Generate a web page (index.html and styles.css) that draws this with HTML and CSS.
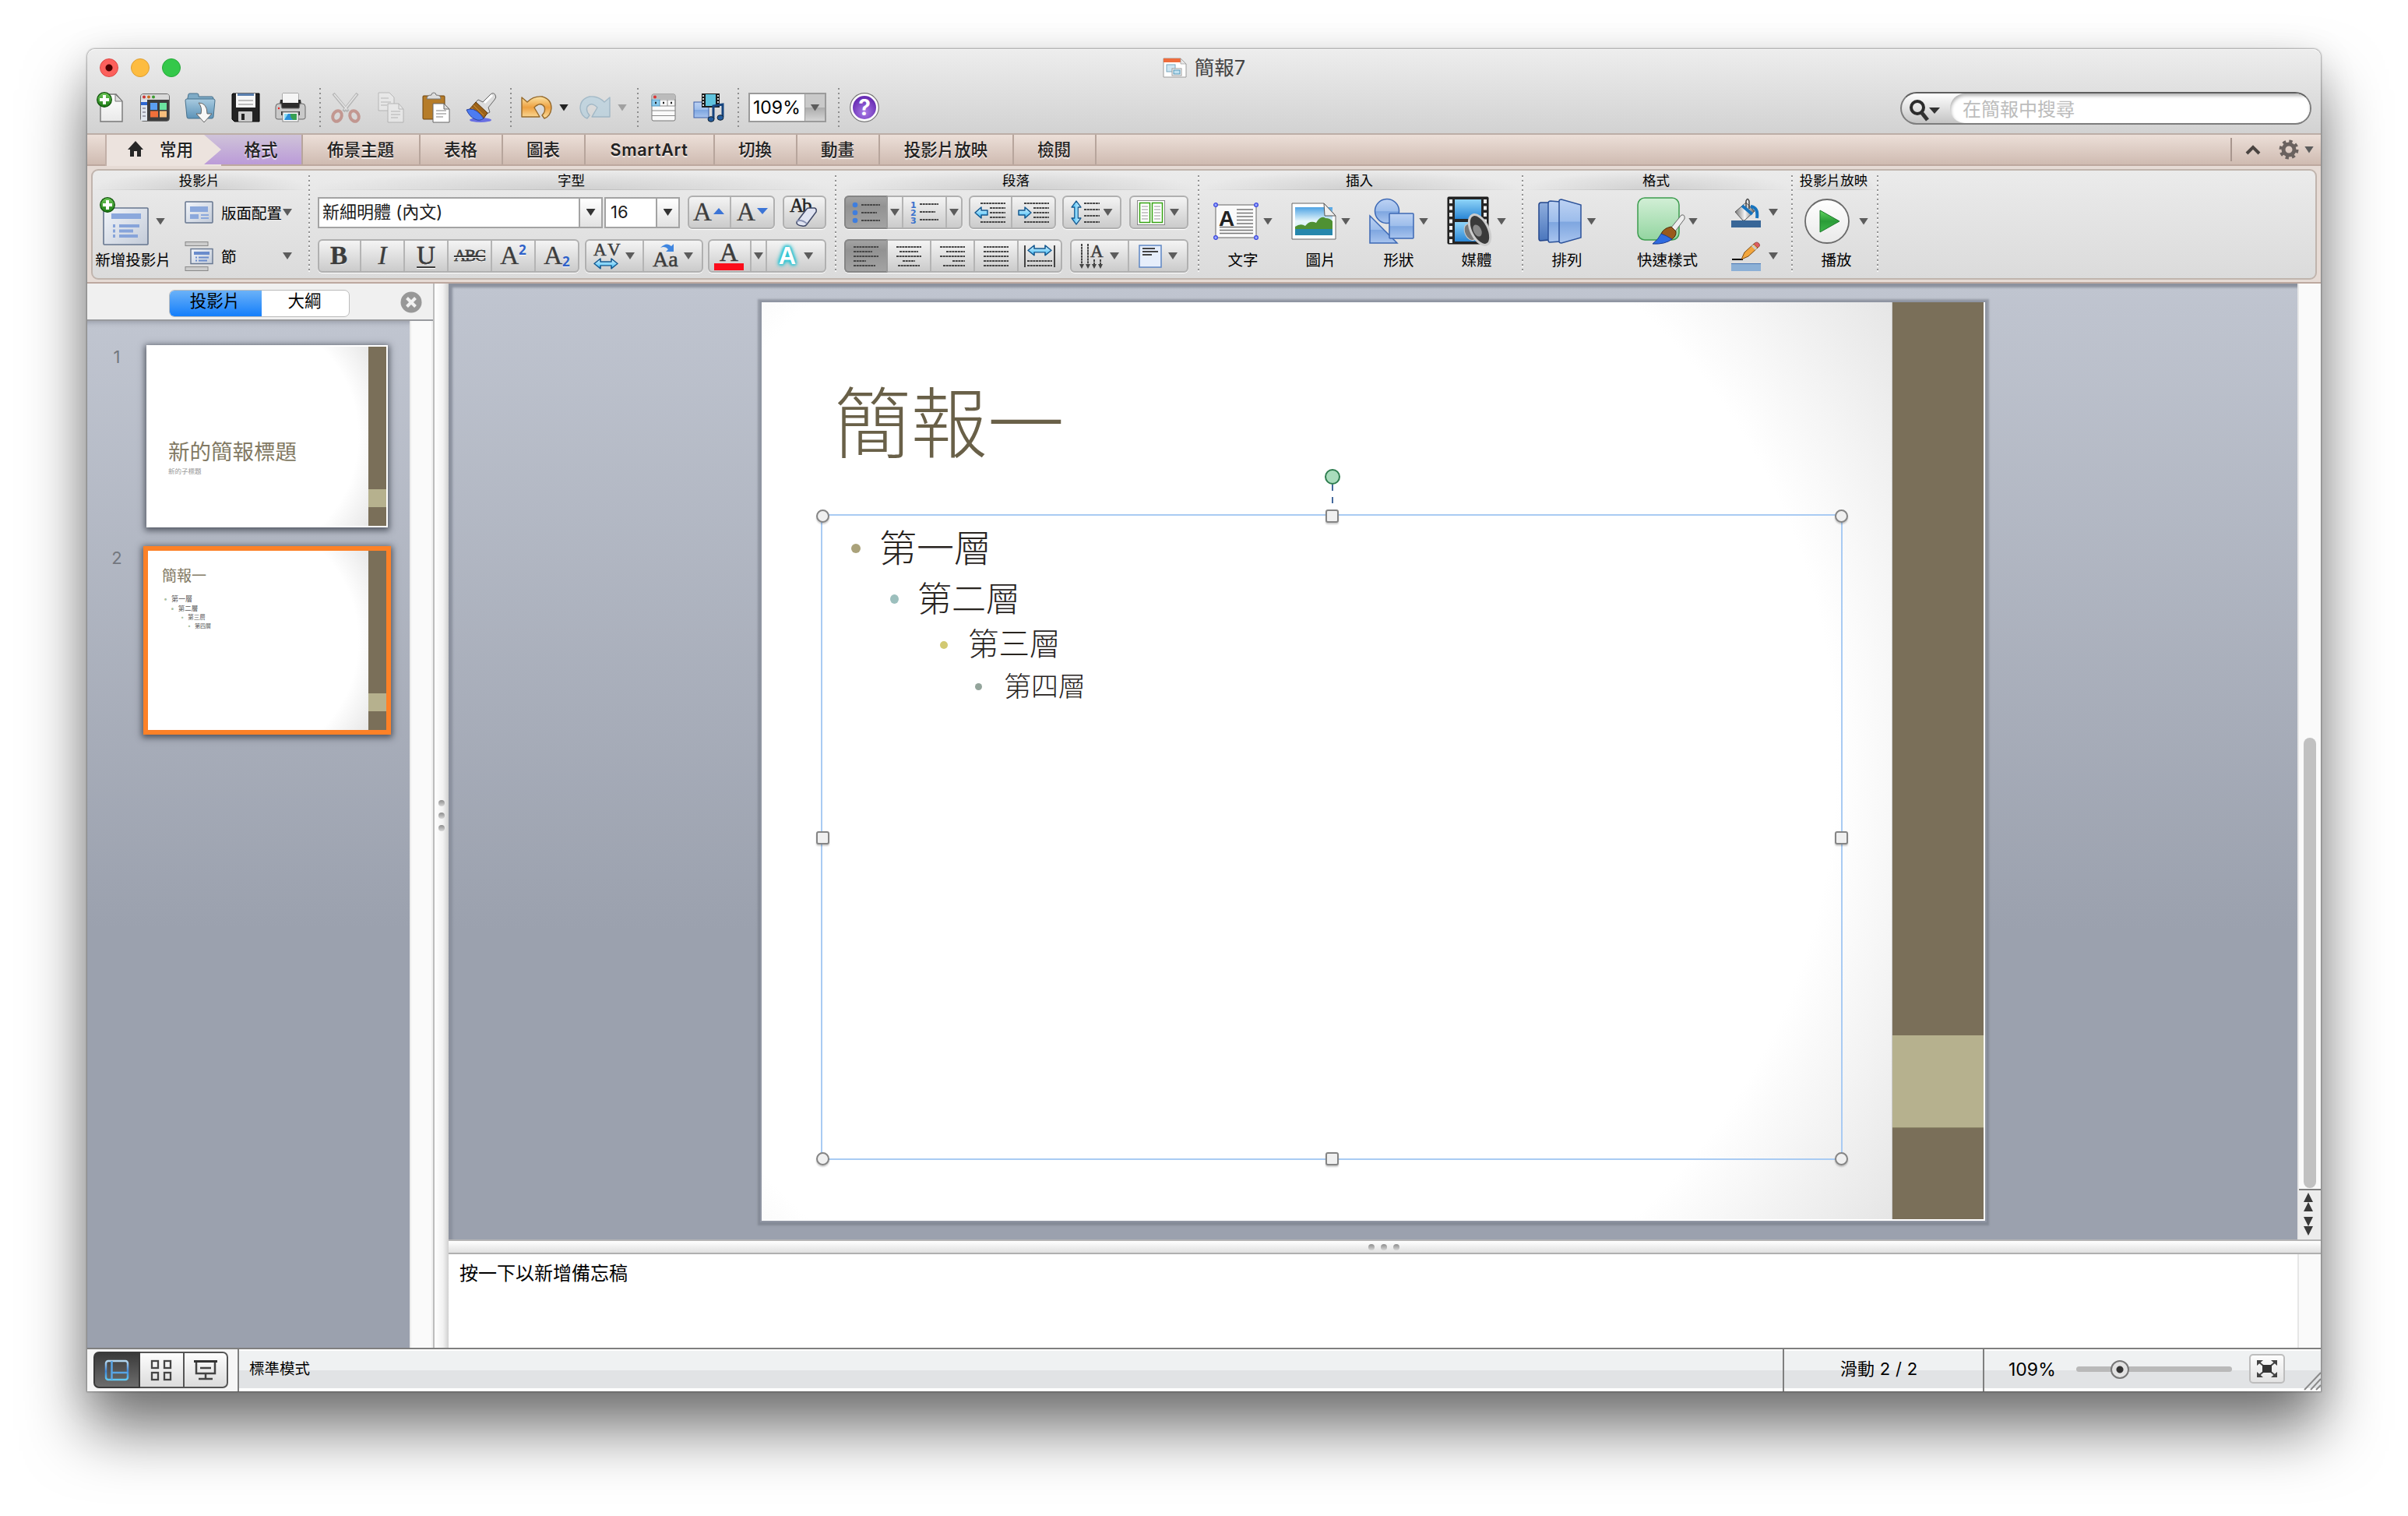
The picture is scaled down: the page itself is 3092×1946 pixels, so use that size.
FILE: index.html
```html
<!DOCTYPE html>
<html lang="zh-Hant">
<head>
<meta charset="utf-8">
<title>簡報7</title>
<link rel="stylesheet" href="styles.css">
</head>
<body>
<svg class="defs" width="0" height="0">
  <defs>
    <linearGradient id="blue" x1="0" y1="0" x2="0" y2="1"><stop offset="0" stop-color="#bdd2f3"/><stop offset=".5" stop-color="#9dbdeb"/><stop offset=".52" stop-color="#7ea6e0"/><stop offset="1" stop-color="#a8c4ee"/></linearGradient>
    <linearGradient id="navy" x1="0" y1="0" x2="0" y2="1"><stop offset="0" stop-color="#8faede"/><stop offset="1" stop-color="#4a76bd"/></linearGradient>
    <linearGradient id="green" x1="0" y1="0" x2="0" y2="1"><stop offset="0" stop-color="#d2efd6"/><stop offset="1" stop-color="#93d5a0"/></linearGradient>
    <linearGradient id="plus" x1="0" y1="0" x2="0" y2="1"><stop offset="0" stop-color="#6fca5a"/><stop offset="1" stop-color="#1b7a14"/></linearGradient>
    <linearGradient id="paper" x1="0" y1="0" x2="0" y2="1"><stop offset="0" stop-color="#fff"/><stop offset="1" stop-color="#e9e9e9"/></linearGradient>
    <linearGradient id="slidepaper" x1="0" y1="0" x2="1" y2="1"><stop offset="0" stop-color="#f2f5fa"/><stop offset="1" stop-color="#c3cbd8"/></linearGradient>
    <linearGradient id="folder" x1="0" y1="0" x2="0" y2="1"><stop offset="0" stop-color="#a9cbe0"/><stop offset="1" stop-color="#5c93b8"/></linearGradient>
    <linearGradient id="gold" x1="0" y1="0" x2="0" y2="1"><stop offset="0" stop-color="#fbe3a3"/><stop offset=".5" stop-color="#eda040"/><stop offset="1" stop-color="#fbe0a0"/></linearGradient>
    <linearGradient id="metal" x1="0" y1="0" x2="1" y2="0"><stop offset="0" stop-color="#777"/><stop offset=".5" stop-color="#f5f5f5"/><stop offset="1" stop-color="#666"/></linearGradient>
    <linearGradient id="sky" x1="0" y1="0" x2="0" y2="1"><stop offset="0" stop-color="#4ea3e4"/><stop offset=".5" stop-color="#e8f7fb"/><stop offset="1" stop-color="#bfe6f2"/></linearGradient>
    <linearGradient id="film" x1="0" y1="0" x2="0" y2="1"><stop offset="0" stop-color="#8fd4f8"/><stop offset="1" stop-color="#2b87d6"/></linearGradient>
    <linearGradient id="playg" x1="0" y1="0" x2="0" y2="1"><stop offset="0" stop-color="#5fd45f"/><stop offset=".5" stop-color="#2a9c38"/><stop offset="1" stop-color="#3db64a"/></linearGradient>
    <linearGradient id="cyan" x1="0" y1="0" x2="0" y2="1"><stop offset="0" stop-color="#e2f8ff"/><stop offset="1" stop-color="#35b6f5"/></linearGradient>
    <radialGradient id="purple" cx=".5" cy=".7" r=".6"><stop offset="0" stop-color="#a97be6"/><stop offset="1" stop-color="#6a2fb5"/></radialGradient>
    <linearGradient id="viewblue" x1="0" y1="0" x2="0" y2="1"><stop offset="0" stop-color="#b5d7ef"/><stop offset=".55" stop-color="#3c86d8"/><stop offset="1" stop-color="#62c8f2"/></linearGradient>
    <g id="badge"><circle cx="10" cy="10" r="9.3" fill="url(#plus)" stroke="#12550d" stroke-width="1.3"/><path d="M10 4v12M4 10h12" stroke="#fff" stroke-width="4"/></g>
    <path id="harrow" d="M0 8L8 0V5H22V0L30 8L22 16V11H8V16Z" fill="url(#cyan)" stroke="#14588f" stroke-width="1.6" stroke-linejoin="round"/>
    <path id="larrow" d="M0 7L8 0V4H16V10H8V14Z" fill="url(#cyan)" stroke="#14588f" stroke-width="1.5" stroke-linejoin="round"/>
  </defs>
</svg>

<div class="window">
  <header class="titlebar">
    <div class="title-row">
      <div class="lights"><i class="red"></i><i class="yellow"></i><i class="green"></i></div>
      <div class="doc-title">
        <svg width="31" height="26" viewBox="0 0 31 26"><path d="M1 1H23L30 8V25H1Z" fill="#fff" stroke="#9a9a9a"/><path d="M1 1H23L25 6H1Z" fill="#ee6c3c"/><path d="M23 1V8H30Z" fill="#e8e8e8" stroke="#999" stroke-width=".7"/><rect x="5" y="9" width="11" height="9" fill="#cfe6f2" stroke="#78a7bf"/><rect x="12" y="14" width="12" height="9" fill="#fff" stroke="#999"/><rect x="14" y="16" width="8" height="5" fill="#bfe0f0" stroke="#4e93b5"/></svg>
        <span>簡報7</span>
      </div>
      <div></div>
    </div>
    <div class="toolbar">
      <div class="tool"><svg width="34" height="40" viewBox="0 0 34 40"><path d="M5 3H25L33 12V38H5Z" fill="url(#paper)" stroke="#777" stroke-width="1.4"/><path d="M24 3V12H33Z" fill="#ddd" stroke="#777"/><use href="#badge" x="0" y="0"/></svg></div>
      <div class="tool"><svg width="38" height="36" viewBox="0 0 38 36"><rect x=".7" y=".7" width="36.6" height="34.6" rx="3" fill="#3c3c3c" stroke="#555"/><path d="M1 8V3Q1 1 3 1H35Q37 1 37 3V8Z" fill="#d9d9d9"/><circle cx="5" cy="4.5" r="2" fill="#c33"/><circle cx="11" cy="4.5" r="2" fill="#c86a1c"/><circle cx="17" cy="4.5" r="2" fill="#3a9a2f"/><rect x="1" y="8" width="8" height="27" fill="#dfe6ee"/><rect x="1" y="11" width="8" height="4" fill="#2c66d0"/><path d="M3 19h4M3 24h4M3 29h4" stroke="#889" stroke-width="1.6"/><rect x="13" y="12" width="9" height="9" fill="#5b9ff0"/><rect x="25" y="12" width="9" height="9" fill="#6be3a0"/><rect x="13" y="22.500" width="10" height="8" fill="#f0703a"/><rect x="25" y="22.500" width="9" height="8" fill="#f6bd7c"/></svg></div>
      <div class="tool"><svg width="40" height="38" viewBox="0 0 40 38"><path d="M3 12L5 2Q5 1 7 1H16Q18 1 18 3V5H35Q37 5 37 8V12Z" fill="#7fabc6" stroke="#47718c"/><path d="M1 10Q1 8 3 8H37Q39 8 39 10L37 31Q37 33 35 33H5Q3 33 3 31Z" fill="url(#folder)" stroke="#47718c"/><path d="M18 13Q29 13 29 27H35L25 38L15 27H21Q23 19 18 13Z" fill="#f7f7f7" stroke="#666"/></svg></div>
      <div class="tool"><svg width="37" height="38" viewBox="0 0 37 38"><path d="M2 1H36V37H4L1 34V2Z" fill="#232323" stroke="#000"/><path d="M6 1H31V19H6Z" fill="#f7f7f7"/><path d="M8 1H29V4H8Z" fill="#5a7fae"/><path d="M9 10h19M9 15h19" stroke="#aaa" stroke-width="1.6"/><rect x="9" y="24" width="18" height="13" rx="1" fill="#ccc"/><rect x="13" y="27" width="4" height="8" fill="#222"/></svg></div>
      <div class="tool"><svg width="40" height="38" viewBox="0 0 40 38"><path d="M10 1H30V12H10Z" fill="#fff" stroke="#777"/><path d="M7 9H33L35 21H5Z" fill="#2d2d2d"/><path d="M10 1H30V13H10Z" fill="#f5f5f5"/><path d="M1 18Q1 14 5 14H8L9 20H31L32 14H35Q39 14 39 18V32Q39 34 36 34H4Q1 34 1 32Z" fill="#c9c9c9" stroke="#666"/><rect x="8" y="24" width="24" height="5" fill="#333"/><circle cx="5" cy="20" r="1.200" fill="#e22"/><rect x="10" y="25" width="20" height="12" fill="#fff" stroke="#888"/><rect x="12" y="27" width="16" height="8" fill="#2b8fd8"/><path d="M12 27h5l-5 8z" fill="#8bdcf4"/><path d="M20 27q-1 4 3 8h5v-8z" fill="#39a053"/></svg></div>
      <i class="tsep"></i>
      <div class="tool faded"><svg width="38" height="40" viewBox="0 0 38 40"><path d="M3 2L22 25M34 2L16 25" stroke="#888" stroke-width="4"/><path d="M4 3L21 23M33 3L17 23" stroke="#eee" stroke-width="1.6"/><ellipse cx="8" cy="31" rx="5.500" ry="7" transform="rotate(25 8 31)" fill="none" stroke="#a94a3c" stroke-width="4"/><ellipse cx="30" cy="31" rx="5.500" ry="7" transform="rotate(-25 30 31)" fill="none" stroke="#a94a3c" stroke-width="4"/></svg></div>
      <div class="tool faded"><svg width="34" height="40" viewBox="0 0 34 40"><path d="M1 1H15L21 7V24H1Z" fill="#f4f4f4" stroke="#888"/><path d="M4 8h10M4 13h13M4 17h8" stroke="#aaa" stroke-width="1.500"/><path d="M13 15H27L33 22V39H13Z" fill="#f7f7f7" stroke="#888"/><path d="M27 15V22H33" fill="none" stroke="#888"/><path d="M17 25h12M17 29h12M17 33h9" stroke="#aaa" stroke-width="1.500"/></svg></div>
      <div class="tool"><svg width="36" height="40" viewBox="0 0 36 40"><rect x="1" y="5" width="28" height="30" rx="1" fill="#b67c28" stroke="#6d430d"/><path d="M6 9Q6 4 12 4Q12 1 15 1Q18 1 18 4Q24 4 24 9Z" fill="#ddd" stroke="#777"/><path d="M14 15H28L35 22V39H14Z" fill="#fff" stroke="#666"/><path d="M28 15V22H35Z" fill="#ddd" stroke="#666"/><path d="M18 24h13M18 28h13M18 32h9" stroke="#aaa" stroke-width="1.500"/></svg></div>
      <div class="tool"><svg width="40" height="40" viewBox="0 0 40 40"><ellipse cx="19" cy="36" rx="14" ry="3" fill="#4e55e6" opacity=".8"/><path d="M22 13L32 3Q36 0 38 4Q40 7 37 10L29 20L31 26L27 28L13 13L16 10Z" fill="#dcdcdc" stroke="#666"/><path d="M24 14L34 4" stroke="#fff" stroke-width="3"/><path d="M13 13L28 27L23 34L5 22Z" fill="#9c6218" stroke="#5a3408"/><path d="M10 17l13 13M7 20l13 12" stroke="#d09238"/><path d="M5 22Q14 21 23 34Q18 38 12 35Q5 32 1 23Z" fill="#4d7cf2" stroke="#2a43a0"/></svg></div>
      <i class="tsep"></i>
      <div class="tool"><svg width="40" height="32" viewBox="0 0 40 32"><path d="M1 3L8 9Q16 1 27 2Q39 5 39 17Q38 27 30 30L27 26Q32 21 30 15Q25 8 17 16L24 28H1Z" fill="url(#gold)" stroke="#96692a" stroke-width="1.400" stroke-linejoin="round"/></svg></div>
      <div class="tdrop"><i class="arrow dark"></i></div>
      <div class="tool faded"><svg width="40" height="32" viewBox="0 0 40 32"><path transform="matrix(-1 0 0 1 40 0)" d="M1 3L8 9Q16 1 27 2Q39 5 39 17Q38 27 30 30L27 26Q32 21 30 15Q25 8 17 16L24 28H1Z" fill="#a4cce2" stroke="#5f8fae" stroke-width="1.400" stroke-linejoin="round"/></svg></div>
      <div class="tdrop faded"><i class="arrow"></i></div>
      <i class="tsep"></i>
      <div class="tool"><svg width="32" height="36" viewBox="0 0 32 36"><rect x="1" y="1" width="30" height="34" rx="2" fill="#fafafa" stroke="#777"/><path d="M1 7V3Q1 1 3 1H29Q31 1 31 3V7Z" fill="#bbb"/><circle cx="5" cy="4.500" r="2" fill="#d33"/><rect x="1" y="8" width="10" height="8" fill="#8ccbee" stroke="#4d93bd"/><path d="M11 8h20v8H11M21 8v8M1 22h30M1 28.500h30" fill="none" stroke="#888"/><path d="M5 12h2M15 12h2M25 12h2" stroke="#222" stroke-width="2.500"/></svg></div>
      <div class="tool"><svg width="40" height="38" viewBox="0 0 40 38"><rect x="1" y="12" width="19" height="20" fill="url(#blue)" stroke="#3a5ea8"/><rect x="11" y="1" width="23" height="18" fill="#1c1c1c"/><rect x="16" y="2" width="13" height="15" fill="#5fc3dd"/><path d="M13 3v15M32 3v15" stroke="#ddd" stroke-width="2" stroke-dasharray="2 2"/><path d="M26 34V17L38 15V31" fill="none" stroke="#17457e" stroke-width="3"/><ellipse cx="23" cy="34" rx="4" ry="3.300" fill="#245d9e" stroke="#123"/><ellipse cx="35" cy="32" rx="4" ry="3.300" fill="#245d9e" stroke="#123"/></svg></div>
      <i class="tsep"></i>
      <div class="zoombox"><span>109%</span><b><i class="arrow"></i></b></div>
      <i class="tsep wide"></i>
      <div class="tool"><svg width="40" height="40" viewBox="0 0 40 40"><circle cx="20" cy="20" r="18.300" fill="#fff" stroke="#777" stroke-width="1.200"/><circle cx="20" cy="20" r="15" fill="url(#purple)"/><text x="20" y="30" text-anchor="middle" class="help-mark">?</text></svg></div>
      <div class="search">
        <div class="search-lens"><svg width="40" height="32" viewBox="0 0 40 32"><circle cx="11" cy="12" r="8" fill="none" stroke="#2b2b2b" stroke-width="4"/><path d="M16 18L24 28" stroke="#333" stroke-width="5"/><path d="M26 12H40L33 20Z" fill="#333"/></svg></div>
        <div class="search-field">在簡報中搜尋</div>
      </div>
    </div>
  </header>

  <nav class="tabs">
    <div class="tab home"><svg width="20" height="20" viewBox="0 0 20 20"><path d="M10 0L20 11H17V20H12V13H8V20H3V11H0Z" fill="#262626"/></svg><span>常用</span></div>
    <div class="tab format">格式</div>
    <div class="tab w151">佈景主題</div>
    <div class="tab w106">表格</div>
    <div class="tab w106">圖表</div>
    <div class="tab w166 bold">SmartArt</div>
    <div class="tab w106">切換</div>
    <div class="tab w106">動畫</div>
    <div class="tab w172">投影片放映</div>
    <div class="tab w106">檢閱</div>
    <div class="tab-tools">
      <svg width="20" height="14" viewBox="0 0 20 14"><path d="M2 12L10 4L18 12" fill="none" stroke="#4a4441" stroke-width="4"/></svg>
      <svg class="gear" width="26" height="26" viewBox="0 0 26 26"><circle cx="13" cy="13" r="7" fill="none" stroke="#6a625f" stroke-width="5"/><circle cx="13" cy="13" r="10.500" fill="none" stroke="#6a625f" stroke-width="4" stroke-dasharray="4.200 4.047"/></svg>
      <i class="arrow"></i>
    </div>
  </nav>

  <section class="ribbon">
    <div class="panel">
      <div class="group g1">
        <h2>投影片</h2>
        <div class="body">
          <div class="big new"><div class="pic"><svg width="64" height="62" viewBox="0 0 64 62"><rect x="5" y="14" width="57" height="47" rx="1" fill="url(#slidepaper)" stroke="#66768f" stroke-width="1.600"/><path d="M15 24.500H53" stroke="#8ba8dc" stroke-width="7"/><path d="M25 37H51M25 43.500H43M25 50H49M17 37h3M17 43.500h3M17 50h3" stroke="#87a4da" stroke-width="4"/><use href="#badge"/></svg><i class="arrow"></i></div><span>新增投影片</span></div>
          <div class="rows">
            <div class="line"><svg width="38" height="30" viewBox="0 0 38 30"><rect x="1" y="1" width="35" height="27" rx="1" fill="url(#slidepaper)" stroke="#66768f" stroke-width="1.500"/><rect x="7" y="7" width="23" height="7" fill="#8ba8dc"/><rect x="7" y="17" width="11" height="6" fill="#8ba8dc"/><path d="M21 18h10M21 22h10" stroke="#8ba8dc" stroke-width="2"/></svg><span>版面配置</span><i class="arrow"></i></div>
            <div class="line"><svg width="38" height="40" viewBox="0 0 38 40"><rect x="1" y="1.500" width="29" height="5" fill="#ccc" stroke="#888"/><rect x="1" y="33.500" width="29" height="5" fill="#ccc" stroke="#888"/><rect x="8" y="10.500" width="28" height="19" fill="url(#slidepaper)" stroke="#66768f" stroke-width="1.400"/><path d="M12 16H32" stroke="#6a8ccc" stroke-width="4"/><path d="M18 21.500h13M18 25.500h11M14 21.500h2M14 25.500h2" stroke="#6a8ccc" stroke-width="2"/></svg><span>節</span><i class="arrow"></i></div>
          </div>
        </div>
      </div>
      <i class="vsep"></i>
      <div class="group g2">
        <h2>字型</h2>
        <div class="brow">
          <div class="combo c1"><span>新細明體 (內文)</span><b><i class="arrow"></i></b></div>
          <div class="combo c2"><span>16</span><b><i class="arrow"></i></b></div>
          <div class="btns ml10"><div class="b56 glyph">A<svg width="14" height="8"><path d="M0 8L7 0L14 8Z" fill="#3b74d6"/></svg></div><div class="b56 glyph">A<svg width="14" height="8"><path d="M0 0L7 8L14 0Z" fill="#3b74d6"/></svg></div></div>
          <div class="btns ml10"><div class="b56"><svg width="40" height="38" viewBox="0 0 40 38"><text x="2" y="18" class="ab">Ab</text><path d="M11 31L24 14Q25 13 27 13H34Q37 14 36 18L24 34Q22 37 18 36Q10 35 11 31Z" fill="#e0e4f2" stroke="#3e4766" stroke-width="1.500"/><path d="M11 30Q17 27 24 33" fill="none" stroke="#8a93b4" stroke-width="2"/></svg></div></div>
        </div>
        <div class="brow">
          <div class="btns"><div class="b56 glyph"><b>B</b></div><div class="b56 glyph"><em>I</em></div><div class="b56 glyph"><u>U</u></div><div class="b56 glyph small"><s>ABC</s></div><div class="b56 glyph">A<sup>2</sup></div><div class="b56 glyph">A<sub>2</sub></div></div>
          <div class="btns ml7"><div class="b76"><svg width="36" height="36" viewBox="0 0 36 36"><text x="1" y="17" class="av">A</text><text x="19" y="17" class="av">V</text><use href="#harrow" transform="translate(2 21) scale(1 .8)"/></svg><i class="arrow"></i></div><div class="b76"><svg width="34" height="36" viewBox="0 0 34 36"><text x="0" y="31" class="aa">Aa</text><path d="M10 7Q18 -1 24 5L27 2V12H17L20 9Q16 4 10 7Z" fill="#3f86e0"/></svg><i class="arrow"></i></div></div>
          <div class="btns ml6"><div class="b56"><svg width="40" height="38" viewBox="0 0 40 38"><text x="8" y="25" class="afont">A</text><rect x="1" y="28" width="38" height="9" fill="#fb0d1b"/></svg></div><div class="b20"><i class="arrow"></i></div><div class="b76"><span class="glow">A</span><i class="arrow"></i></div></div>
        </div>
      </div>
      <i class="vsep"></i>
      <div class="group g3">
        <h2>段落</h2>
        <div class="brow">
          <div class="btns"><div class="b56 on"><svg width="36" height="30" viewBox="0 0 36 30"><g fill="#3f7ede"><circle cx="4" cy="5" r="3.300"/><circle cx="4" cy="15" r="3.300"/><circle cx="4" cy="25" r="3.300"/></g><path class="ln" d="M12 5h24M12 15h20M12 25h24"/></svg></div><div class="b20"><i class="arrow"></i></div><div class="b56"><svg width="36" height="32" viewBox="0 0 36 32"><text class="num" x="0" y="10">1</text><text class="num" x="0" y="20">2</text><text class="num" x="0" y="30">3</text><path class="ln" d="M12 5h24M12 15h20M12 25h24"/></svg></div><div class="b20"><i class="arrow"></i></div></div>
          <div class="btns ml8"><div class="b56"><svg width="40" height="28" viewBox="0 0 40 28"><path class="ln" d="M8 2h32M20 8h20M20 14h20M20 20h20M8 26h32"/><use href="#larrow" transform="translate(1 7)"/></svg></div><div class="b56"><svg width="40" height="28" viewBox="0 0 40 28"><path class="ln" d="M8 2h32M20 8h20M20 14h20M20 20h20M8 26h32"/><use href="#larrow" transform="translate(17 7) scale(-1 1)"/></svg></div></div>
          <div class="btns ml8"><div class="b76 tight"><svg width="38" height="32" viewBox="0 0 38 32"><use href="#harrow" transform="translate(14 1) rotate(90) scale(1 .75)"/><path class="ln" d="M18 4h20M18 12h20M18 20h20M18 28h20"/></svg><i class="arrow"></i></div></div>
          <div class="btns ml10"><div class="b76"><svg width="36" height="32" viewBox="0 0 36 32"><rect x=".5" y=".5" width="35" height="31" fill="#fff" stroke="#888"/><rect x="3.500" y="3.500" width="13" height="25" fill="none" stroke="#36a313" stroke-width="1.500"/><rect x="19.500" y="3.500" width="13" height="25" fill="none" stroke="#36a313" stroke-width="1.500"/><path d="M6 8h8M6 12h8M6 16h8M6 20h8M6 24h8M22 8h8M22 12h8M22 16h8M22 20h8M22 24h8" stroke="#bbb" stroke-width="1.600"/></svg><i class="arrow"></i></div></div>
        </div>
        <div class="brow">
          <div class="btns"><div class="b56 on"><svg width="34" height="28"><path class="ln" d="M1 2h32M1 8h24M1 14h32M1 20h16M1 26h28"/></svg></div><div class="b56"><svg width="34" height="28"><path class="ln" d="M1 2h32M5 8h24M1 14h32M9 20h16M3 26h28"/></svg></div><div class="b56"><svg width="34" height="28"><path class="ln" d="M1 2h32M9 8h24M1 14h32M17 20h16M5 26h28"/></svg></div><div class="b56"><svg width="34" height="28"><path class="ln" d="M1 2h32M1 8h32M1 14h32M1 20h32M1 26h32"/></svg></div><div class="b56"><svg width="40" height="30" viewBox="0 0 40 30"><path d="M1 1v28M39 1v28" stroke="#444" stroke-width="2"/><use href="#harrow" transform="translate(5 1) scale(1 .8)"/><path class="ln" d="M4 21h32M4 27h32"/></svg></div></div>
          <div class="btns ml10"><div class="b76"><svg width="34" height="34" viewBox="0 0 34 34"><path class="ln" d="M4 1v26M12 1v26M20 21v6M28 21v6"/><path d="M1 27h6l-3 6zM9 27h6l-3 6zM17 27h6l-3 6zM25 27h6l-3 6z" fill="#444"/><text x="15" y="18" class="av">A</text></svg><i class="arrow"></i></div><div class="b76 wide-gap"><svg width="30" height="30"><rect x="1" y="1" width="28" height="28" fill="#e6eefb" stroke="#5e86c4" stroke-width="1.500"/><path d="M5 5h16M5 9h20M5 13h12" stroke="#444" stroke-width="1.800"/></svg><i class="arrow"></i></div></div>
        </div>
      </div>
      <i class="vsep"></i>
      <div class="group g4">
        <h2>插入</h2>
        <div class="body">
          <div class="big"><div class="pic"><svg width="58" height="48" viewBox="0 0 58 48"><rect x="3" y="3" width="52" height="42" fill="#fafafa" stroke="#666"/><text x="7" y="30" class="bigA">A</text><path d="M30 9h21M30 13.500h21M30 18h21M30 22.500h21M30 27h21M8 31.500h43M8 35.500h43M8 39.500h43" stroke="#777" stroke-width="1.500"/><g fill="#9db0ff" stroke="#3a44e0" stroke-width="1.300"><circle cx="3" cy="3" r="2.300"/><circle cx="55" cy="3" r="2.300"/><circle cx="3" cy="45" r="2.300"/><circle cx="55" cy="45" r="2.300"/></g></svg><i class="arrow"></i></div><span>文字</span></div>
          <div class="big"><div class="pic"><svg width="58" height="48" viewBox="0 0 58 48"><path d="M1 1H42L57 17V47H1Z" fill="#fff" stroke="#666"/><path d="M5 6H53V42H5Z" fill="url(#sky)"/><path d="M5 31Q12 26 18 30Q24 22 32 26Q38 16 44 20Q50 20 53 24V35H5Z" fill="#4f9133"/><path d="M5 34H53V42H5Z" fill="#2687ad"/><path d="M42 1L43 17H57Z" fill="#eee" stroke="#555"/></svg><i class="arrow"></i></div><span>圖片</span></div>
          <div class="big"><div class="pic"><svg width="58" height="60" viewBox="0 0 58 60"><circle cx="23" cy="17" r="15.500" fill="url(#blue)" stroke="#3c68b4" stroke-width="1.500"/><path d="M1 23L36 58H1Z" fill="url(#blue)" stroke="#3c68b4" stroke-width="1.500"/><rect x="26" y="20" width="31" height="32" rx="1" fill="url(#blue)" stroke="#3c68b4" stroke-width="1.500"/></svg><i class="arrow"></i></div><span>形狀</span></div>
          <div class="big"><div class="pic"><svg width="58" height="64" viewBox="0 0 58 64"><rect x="1" y="1" width="52" height="60" rx="1" fill="#262626" stroke="#111"/><path d="M5 4v56M49 4v56" stroke="#eee" stroke-width="4" stroke-dasharray="5 3.500"/><rect x="10" y="4" width="34" height="25" fill="url(#film)"/><rect x="10" y="33" width="34" height="25" fill="url(#film)"/><ellipse cx="30" cy="46" rx="7" ry="11" transform="rotate(-25 30 46)" fill="#777" stroke="#ccc"/><ellipse cx="42" cy="43" rx="11" ry="21" transform="rotate(-27 42 43)" fill="#3a3a3a" stroke="#ccc" stroke-width="3"/><ellipse cx="39" cy="44" rx="5" ry="8" transform="rotate(-27 39 44)" fill="#888"/></svg><i class="arrow"></i></div><span>媒體</span></div>
        </div>
      </div>
      <i class="vsep"></i>
      <div class="group g5">
        <h2>格式</h2>
        <div class="body">
          <div class="big w112"><div class="pic gap7"><svg width="56" height="58" viewBox="0 0 56 58"><path d="M1 8Q1 5 4 5L14 5V53L3 54Q1 54 1 51Z" fill="url(#navy)" stroke="#23458a" stroke-width="1.500"/><path d="M13 6Q13 3 16 3L28 4V55L15 56Q13 56 13 53Z" fill="url(#blue)" stroke="#2c5299" stroke-width="1.500"/><path d="M27 3Q27 1 30 1L55 8V50L30 57Q27 57 27 55Z" fill="url(#blue)" stroke="#2c5299" stroke-width="1.500"/></svg><i class="arrow"></i></div><span>排列</span></div>
          <div class="big w112 ml17"><div class="pic gap4"><svg width="62" height="62" viewBox="0 0 62 62"><rect x="1" y="1" width="53" height="54" rx="9" fill="url(#green)" stroke="#3c9c4e" stroke-width="1.500"/><path d="M44 39L57 23Q62 22 61 28L49 44Z" fill="#eee" stroke="#666"/><path d="M44 38L50 44Q51 52 41 56L31 47Q34 40 44 38Z" fill="#9a5a1c" stroke="#4c2a08"/><path d="M31 47Q37 49 45 54Q36 61 20 60Q27 55 31 47Z" fill="#2f6be0" stroke="#1c3c90"/></svg><i class="arrow"></i></div><span>快速樣式</span></div>
          <div class="rows fills">
            <div class="line"><svg width="38" height="38" viewBox="0 0 38 38"><path d="M5 18L19 6L30 17L17 29H15Z" fill="url(#metal)" stroke="#555"/><path d="M19 16V4Q21 -1 23 4V14" fill="none" stroke="#444" stroke-width="1.500"/><path d="M14 10L27 21M25 11Q35 12 33 26" stroke="#1773bd" stroke-width="4" fill="none"/><rect y="29" width="38" height="9" fill="#386697"/></svg><i class="arrow"></i></div>
            <div class="line"><svg width="38" height="38" viewBox="0 0 38 38"><path d="M1 23h14" stroke="#000" stroke-width="2"/><path d="M13 23L17 14L29 3L34 8L22 19Z" fill="#f3a63c" stroke="#7c4b12"/><path d="M29 3Q33 -1 36 3Q38 6 34 8Z" fill="#df5b63" stroke="#954"/><path d="M27 5L32 10" stroke="#ccc" stroke-width="3"/><rect y="28" width="38" height="10" fill="#8cb0d6"/><path d="M0 28.500h38" stroke="#4b78b5"/></svg><i class="arrow"></i></div>
          </div>
        </div>
      </div>
      <i class="vsep"></i>
      <div class="group g6">
        <h2>投影片放映</h2>
        <div class="body">
          <div class="big"><div class="pic gap12"><svg width="58" height="60" viewBox="0 0 58 60"><circle cx="29" cy="30" r="28" fill="url(#paper)" stroke="#6b6b6b" stroke-width="1.800"/><path d="M20 16L45 30L20 44Z" fill="url(#playg)" stroke="#1d7a2a"/></svg><i class="arrow"></i></div><span>播放</span></div>
        </div>
      </div>
      <i class="vsep"></i>
    </div>
  </section>

  <main class="content">
    <aside class="sidebar">
      <div class="side-head">
        <div class="segmented"><span class="sel">投影片</span><span>大綱</span></div>
        <svg width="28" height="28" viewBox="0 0 28 28"><circle cx="14" cy="14" r="13.500" fill="#989898"/><path d="M8.500 8.500L19.500 19.500M19.500 8.500L8.500 19.500" stroke="#f2f2f2" stroke-width="4"/></svg>
      </div>
      <div class="side-body">
        <div class="thumbs">
          <div class="thumb-row"><span class="no">1</span>
            <div class="thumb"><div class="page t1"><p class="tt">新的簡報標題</p><p class="ts">新的子標題</p></div><div class="band"><i></i></div></div>
          </div>
          <div class="thumb-row"><span class="no">2</span>
            <div class="thumb current"><div class="page t2"><p class="tt">簡報一</p><ul><li>第一層</li><li>第二層</li><li>第三層</li><li>第四層</li></ul></div><div class="band"><i></i></div></div>
          </div>
        </div>
        <div class="track"></div>
      </div>
    </aside>
    <div class="vsplit"><i></i><i></i><i></i></div>
    <div class="work">
      <div class="stage-row">
        <div class="stage">
          <article class="slide">
            <div class="slide-page">
              <h1>簡報一</h1>
              <div class="placeholder">
                <ul>
                  <li class="l1">第一層</li>
                  <li class="l2">第二層</li>
                  <li class="l3">第三層</li>
                  <li class="l4">第四層</li>
                </ul>
                <b class="stem"></b><b class="rot"></b>
                <b class="h c" style="left:0;top:0"></b><b class="h" style="left:50%;top:0"></b><b class="h c" style="left:100%;top:0"></b>
                <b class="h" style="left:0;top:50%"></b><b class="h" style="left:100%;top:50%"></b>
                <b class="h c" style="left:0;top:100%"></b><b class="h" style="left:50%;top:100%"></b><b class="h c" style="left:100%;top:100%"></b>
              </div>
            </div>
            <div class="slide-band"><i></i></div>
          </article>
        </div>
        <div class="scroll">
          <div class="scroll-track"><i></i></div>
          <div class="scroll-btns"><svg width="14" height="56" viewBox="0 0 14 56"><path d="M7 0L13 12H1ZM7 12L13 24H1ZM1 31H13L7 43ZM1 43H13L7 55Z" fill="#3a3a3a"/></svg></div>
        </div>
      </div>
      <div class="hsplit"><i></i><i></i><i></i></div>
      <div class="notes"><p>按一下以新增備忘稿</p><div class="notes-track"></div></div>
    </div>
  </main>

  <footer class="status">
    <div class="views">
      <div class="view on"><svg width="32" height="28" viewBox="0 0 32 28"><rect x="2" y="2" width="28" height="24" rx="3" fill="none" stroke="url(#viewblue)" stroke-width="2.500"/><path d="M9.500 2V26M10 17H30" stroke="#57a4e4" stroke-width="2.500"/></svg></div>
      <div class="view"><svg width="28" height="28" viewBox="0 0 28 28"><g fill="none" stroke="#444" stroke-width="2.300"><rect x="2" y="2" width="8" height="9"/><rect x="18" y="2" width="8" height="9"/><rect x="2" y="17" width="8" height="9"/><rect x="18" y="17" width="8" height="9"/></g></svg></div>
      <div class="view"><svg width="30" height="28" viewBox="0 0 30 28"><path d="M0 2.500H30" stroke="#333" stroke-width="3"/><path d="M3 4V18H27V4M8 11H22M15 18V24M6 25H24" fill="none" stroke="#444" stroke-width="2.500"/></svg></div>
    </div>
    <div class="mode">標準模式</div>
    <div class="pageno">滑動 2 / 2</div>
    <div class="zoom"><span>109%</span><div class="slider"><i></i></div><div class="fit"><svg width="28" height="24" viewBox="0 0 28 24"><path d="M3 3L25 21M25 3L3 21" stroke="#444" stroke-width="2"/><rect x="8" y="7" width="12" height="10" fill="#333"/><path d="M1 1h8L1 8zM27 1h-8l8 7zM1 23h8l-8-7zM27 23h-8l8-7z" fill="#444"/></svg></div><svg class="grip" width="22" height="22" viewBox="0 0 22 22"><path d="M1 22L22 0M9 22L22 8M16 22L22 16" stroke="#8a8a8a" stroke-width="2"/></svg></div>
  </footer>
</div>
</body>
</html>
```
FILE: styles.css
```css
* { box-sizing: border-box; }
body {
  margin: 0;
  width: 3092px;
  height: 1946px;
  padding: 63px 112px 0;
  background: #fff;
  overflow: hidden;
  font-family: Inter, "Noto Sans CJK TC", sans-serif;
  font-size: 20px;
  color: #000;
}
h1, h2, p, ul { margin: 0; padding: 0; font-weight: 400; list-style: none; }
svg { display: block; flex: none; overflow: visible; }
.defs { position: absolute; }
.window {
  width: 2868px;
  height: 1723px;
  display: flex;
  flex-direction: column;
  border-radius: 10px 10px 0 0;
  box-shadow: 0 0 2px 1px rgba(0,0,0,.3), 0 50px 80px rgba(0,0,0,.52), 0 10px 50px rgba(0,0,0,.12);
}
.arrow {
  display: block;
  flex: none;
  width: 12px;
  height: 9px;
  background: #5c5c5c;
  clip-path: polygon(0 0, 100% 0, 50% 100%);
}
.arrow.dark { background: #222; }
.faded { opacity: .45; }

/* title bar and toolbar */
.titlebar {
  height: 108px;
  flex: none;
  background: linear-gradient(#ededed, #d2d2d2);
  border-radius: 10px 10px 0 0;
  border-top: 1px solid #f8f8f8;
}
.title-row { height: 45px; display: grid; grid-template-columns: 1fr auto 1fr; align-items: center; }
.lights { display: flex; gap: 16px; padding-left: 16px; }
.lights i { width: 24px; height: 24px; border-radius: 50%; border: 1px solid; }
.red { background: radial-gradient(circle, #4d0000 4px, #fc605c 5px); border-color: #de4643 !important; }
.yellow { background: #fdbc40; border-color: #dd9f33 !important; }
.green { background: #34c84a; border-color: #27a93a !important; }
.doc-title { display: flex; gap: 10px; align-items: center; font-size: 25.5px; color: #444; line-height: 30px; }
.toolbar { height: 58px; display: flex; align-items: center; }
.tool { width: 58px; display: flex; justify-content: center; flex: none; }
.tsep {
  width: 2px; height: 50px; margin: 0 3px 0 8px; flex: none;
  background: repeating-linear-gradient(#8d8d8d 0 2px, transparent 2px 6px);
}
.tsep.wide { margin-left: 15px; }
.tdrop { width: 17px; display: flex; }
.zoombox { margin-left: 9px; width: 100px; height: 38px; display: flex; border: 2px solid #9a9a9a; background: #fff; font-size: 23px; line-height: 35px; }
.zoombox span { width: 70px; padding-left: 4px; }
.zoombox b { flex: 1; display: grid; place-items: center; background: linear-gradient(#c9c9c9 50%, #ababab 50%, #d5d5d5); border-left: 1px solid #999; }
.help-mark { font: 700 28px Inter, sans-serif; fill: #fff; }
.search {
  margin: 1px 12px 0 auto; width: 528px; height: 42px; display: flex; border-radius: 21px; border: 2px solid #7d7d7d; border-top-color: #5e5e5e;
  background: linear-gradient(#fff, #c4c4c4); overflow: hidden;
}
.search-lens { width: 62px; padding: 6px 0 0 9px; }
.search-field { flex: 1; padding-left: 16px; border-radius: 19px 0 0 19px; background: #fff; box-shadow: inset 1px 3px 4px rgba(0,0,0,.3); font-size: 24px; line-height: 42px; color: #bcbcbc; }

/* tabs */
.tabs { height: 42px; flex: none; display: flex; padding-left: 23px; background: linear-gradient(#ecdfd8, #cfbbb1); border-top: 2px solid #bcaea7; border-bottom: 2px solid #bda89f; }
.tab { display: flex; align-items: center; justify-content: center; font-size: 21.5px; line-height: 30px; font-weight: 500; color: #222; border-right: 2px solid #b7a59c; text-shadow: 0 2px 1px rgba(255,255,255,.7); padding: 0 1px 1px 0; flex: none; }
.home { width: 149px; margin-right: -22px; padding: 0 0 4px 27px; gap: 21px; justify-content: flex-start; border: 0; border-left: 2px solid #c2b0a8; background: #ece3de; margin-bottom: -3px; }
.home svg { margin-top: -2px; }
.format { width: 127px; padding-left: 22px; background: linear-gradient(#cfc3d9, #bb9bd8); clip-path: polygon(0 0, 100% 0, 100% 100%, 0 100%, 22px 50%); }
.w151 { width: 151px; } .w106 { width: 106px; } .w166 { width: 166px; } .w172 { width: 172px; }
.bold { font-weight: 600; letter-spacing: .7px; }
.tab-tools { margin: 4px 9px 4px auto; padding-left: 17px; border-left: 2px solid #a8968e; display: flex; align-items: center; gap: 23px; }
.tab-tools .arrow { margin-left: -16px; }

/* ribbon */
.ribbon { height: 151px; flex: none; padding: 4px 5px 4px; background: #e6dbd5; border-bottom: 2px solid #bda89f; }
.panel { height: 142px; display: flex; align-items: center; background: linear-gradient(#ebebeb, #dbdbdb); border: 2px solid #c0b4ad; border-radius: 9px; }
.group { height: 138px; flex: none; }
.g1 { width: 277px; } .g2 { width: 674px; } .g3 { width: 464px; } .g4 { width: 414px; } .g5 { width: 344px; } .g6 { width: 108px; }
.group h2 {
  height: 25px; padding-right: 3px; margin: 0 0 7px; font-size: 17.5px; line-height: 25px; text-align: center; white-space: nowrap;
  background: linear-gradient(90deg, transparent, #bdbdbd 50%, transparent) 0 100% / 100% 1px no-repeat, radial-gradient(ellipse 50% 100% at 50% 100%, #cfcfcf, transparent);
}
.vsep { width: 2px; height: 126px; flex: none; background: repeating-linear-gradient(#929292 0 2px, #f5f5f5 2px 4px, transparent 4px 6px); }
.body { display: flex; height: 100px; }
.big { width: 100px; flex: none; display: flex; flex-direction: column; align-items: center; }
.big .pic { height: 70px; display: flex; align-items: center; gap: 6px; }
.big span { font-size: 19.5px; line-height: 34px; white-space: nowrap; }
.big.new { width: 102px; }
.new .pic { gap: 8px; }
.new span { margin-left: 2px; }
.big .pic.gap7 { gap: 7px; } .big .pic.gap4 { gap: 4px; } .big .pic.gap12 { gap: 12px; }
.big.w112 { width: 112px; } .ml17 { margin-left: 17px; }
.g6 .big { width: 112px; }
.g4 .body { padding-left: 6px; }
.rows { margin-left: 16px; width: 138px; flex: none; }
.rows .line { height: 43px; margin-bottom: 13px; display: flex; align-items: center; }
.rows span { margin-left: 9px; font-size: 19.5px; width: 79px; white-space: nowrap; }
.rows.fills { margin-left: 26px; width: 62px; }
.fills .line { gap: 10px; }
.brow { display: flex; height: 43px; margin: 0 0 13px 10px; align-items: center; }
.combo { height: 40px; display: flex; border: 2px solid #a3a3a3; background: #fff; font-size: 22px; line-height: 35px; color: #1c1c1c; }
.combo span { flex: 1; padding-left: 4px; white-space: nowrap; }
.combo b { width: 29px; display: grid; place-items: center; border-left: 2px solid #a3a3a3; background: linear-gradient(#fff, #e2e2e2); }
.combo .arrow { background: #333; }
.c1 { width: 366px; } .c2 { width: 97px; margin-left: 2px; }
.c2 span { padding-left: 6px; }
.btns { display: flex; height: 43px; border: 2px solid #b0b0b0; border-radius: 6px; background: linear-gradient(#f4f4f4, #cbcbcb); box-shadow: 0 1px 1px #fff; }
.btns > div { display: flex; flex: none; align-items: center; justify-content: center; border-right: 2px solid #b4b4b4; height: 39px; }
.b56 { width: 56px; } .b76 { width: 76px; gap: 6px; } .b20 { width: 20px; }
.btns > div:first-child { margin-left: -2px; }
.btns > div:last-child { border-right: 0; }
.btns > .b56:last-child { width: 54px; }
.btns > .b76:last-child { width: 74px; }
.btns > .b20:last-child { width: 18px; }
.b76.wide-gap { gap: 8px; }
.b76.tight { gap: 5px; }
.btns > .on:first-child { height: 43px; margin-top: -2px; border-radius: 6px 0 0 6px; border: 2px solid #858585; border-right-color: #999; }
.on { background: linear-gradient(#a3a3a3, #929292 30%, #a3a3a3); }
.ml6 { margin-left: 6px; } .ml7 { margin-left: 7px; } .ml8 { margin-left: 8px; } .ml10 { margin-left: 10px; }
.glyph { font: 33px/37px "Liberation Serif", serif; color: #3c3c3c; text-shadow: 0 1px 0 #fff; -webkit-text-stroke: .4px #3c3c3c; }
.glyph svg { margin: 0 0 4px 2px; }
.glyph.small { font-size: 21px; letter-spacing: -1px; }
.glyph u { text-decoration-thickness: 2px; text-underline-offset: 3px; }
.glyph sup, .glyph sub { font: 700 17px/17px "Open Sans", sans-serif; color: #2f62c8; -webkit-text-stroke: 0; }
.glyph sup { margin-top: -16px; } .glyph sub { margin-top: 14px; }
.ab { font: 25px "Liberation Serif", serif; letter-spacing: -2px; fill: #222; stroke: #222; stroke-width: .5; }
.av { font: 23px "Liberation Serif", serif; fill: #3c3c3c; stroke: #3c3c3c; stroke-width: .5; }
.aa { font: 28px "Liberation Serif", serif; fill: #3c3c3c; stroke: #3c3c3c; stroke-width: .5; }
.afont { font: 33px "Liberation Serif", serif; fill: #3c3c3c; stroke: #3c3c3c; stroke-width: .5; }
.num { font: 700 11px "DejaVu Sans", sans-serif; fill: #3a72cc; }
.bigA { font: 700 28px "Liberation Sans", sans-serif; fill: #222; }
.glow { margin-right: 4px; font: 700 31px/37px "Liberation Sans", sans-serif; color: #fff; text-shadow: 0 0 3px #35c6d4, 0 0 3px #35c6d4, 0 0 4px #35c6d4, 0 0 5px #35c6d4, 0 0 6px #35c6d4, 0 0 6px #35c6d4; }
.ln { fill: none; stroke: #454545; stroke-width: 2; stroke-dasharray: 3 .7; }

/* sidebar */
.content { flex: 1; min-height: 0; display: flex; }
.sidebar { width: 446px; flex: none; display: flex; flex-direction: column; border-right: 2px solid #bdbdbd; }
.side-head { height: 48px; flex: none; display: flex; align-items: center; justify-content: space-between; padding: 0 14px 0 105px; background: #f0f0f0; border-bottom: 2px solid #989a9e; }
.segmented { width: 232px; height: 35px; margin-top: 4px; display: flex; border-radius: 7px; background: #fff; border: 1px solid #bbb; font-size: 21.5px; line-height: 26px; text-align: center; overflow: hidden; }
.segmented span { flex: 1; padding-right: 2px; }
.segmented .sel { flex: none; width: 118px; background: linear-gradient(#6bb2f8, #147efb); }
.side-head svg { margin-bottom: -2px; }
.side-body { flex: 1; display: flex; }
.thumbs { width: 414px; padding-top: 31px; background: linear-gradient(#c0c5d0, #9ba1ae 780px); box-shadow: inset 0 8px 6px -6px rgba(90,95,110,.4); }
.track { flex: 1; background: #fafafa; border-left: 2px solid #ececec; border-right: 2px solid #f0f0f0; }
.thumb-row { display: flex; height: 258px; }
.no { width: 76px; flex: none; text-align: center; font-size: 22px; line-height: 30px; color: #73777f; }
.thumb { width: 310px; height: 234px; display: flex; border: 2px solid #fff; box-shadow: 0 2px 8px 2px rgba(50,55,65,.75); background: #fff; }
.current { width: 318px; height: 242px; margin: 0 0 0 -4px; border: 6px solid #fd8127; }
.page { flex: 1; background: radial-gradient(circle at 110px 50%, #fff 160px, #e6e6e6 210px); font-weight: 300; }
.band, .slide-band { background: #7a6f59; }
.band { width: 23px; display: flex; }
.band i { width: 23px; height: 23px; margin-top: 183px; background: #b6b18e; }
.t1 .tt { padding: 116px 0 0 26px; font-size: 27.5px; line-height: 38px; color: #827963; }
.t1 .ts { padding-left: 26px; font-size: 8.5px; line-height: 12px; color: #999; }
.t2 .tt { padding: 21px 0 0 18px; font-size: 19px; line-height: 24px; color: #827963; }
.t2 ul { padding: 11px 0 0 28px; font-size: 9px; line-height: 12px; color: #555; }
.t2 li::before { content: "•"; margin-right: 5px; margin-left: -8px; color: #a8c0a0; }
.t2 li:nth-child(2) { padding-left: 9px; font-size: 8.5px; }
.t2 li:nth-child(3) { padding-left: 22px; font-size: 7.500px; }
.t2 li:nth-child(4) { padding-left: 31px; font-size: 7px; line-height: 10px; }
.vsplit { width: 18px; flex: none; display: flex; flex-direction: column; align-items: center; justify-content: center; gap: 8px; padding: 0 1px 1px 0; background: linear-gradient(90deg, #fff, #f2f2f2 60%, #d0d0d0); }
.vsplit i, .hsplit i { width: 8px; height: 8px; border-radius: 50%; background: linear-gradient(#8d8d8d, #d8d8d8); }

/* slide editor */
.work { flex: 1; display: flex; flex-direction: column; }
.stage-row { height: 1227px; display: flex; }
.stage { width: 2374px; padding: 24px 0 0 402px; background: linear-gradient(#c0c5d0, #9ba1ae 830px); box-shadow: inset 5px 5px 3px #8b919e; }
.slide { width: 1571px; height: 1179px; display: flex; border-right: 2px solid #fff; border-bottom: 2px solid #fff; background: #fff; box-shadow: 0 0 0 2px #8f95a2, 0 1px 2px 5px rgba(110,115,128,.5); }
.slide-page { flex: 1; padding: 82px 0 0 76px; background: radial-gradient(circle at 590px 50%, #fff 790px, #e5e5e5 1050px); border-right: 1px solid #ccc; }
.slide-page h1 { padding-left: 17px; font-size: 98.5px; line-height: 150px; font-weight: 300; color: #696048; }
.slide-band { width: 117px; padding-top: 941px; }
.slide-band i { display: block; height: 119px; background: #b6b18e; border-bottom: 1px solid #8d8768; }
.placeholder { position: relative; width: 1312px; height: 829px; margin-top: 40px; border: 2px solid #a9cbf3; }
.placeholder ul { padding: 8px 0 0 37px; color: #28241f; font-weight: 300; }
.placeholder li { display: flex; align-items: center; line-height: 1; }
.placeholder li::before { content: ""; width: 12px; height: 12px; margin-right: 24px; border-radius: 50%; background: #aaa27a; }
.placeholder .l1 { font-size: 48px; height: 68px; }
.placeholder .l2 { font-size: 44px; height: 62px; padding-left: 50px; }
.placeholder .l2::before { width: 11px; background: #9cbfbd; }
.placeholder .l3 { font-size: 39.5px; height: 56px; padding-left: 114px; }
.placeholder .l3::before { width: 10px; height: 10px; margin-right: 26px; background: #d2c972; }
.placeholder .l4 { font-size: 35px; height: 50px; padding-left: 159px; }
.placeholder .l4::before { width: 9px; height: 9px; margin-right: 28px; background: #93a49b; }
.h { position: absolute; width: 17px; height: 17px; margin: -8px; border: 2px solid #858585; border-radius: 3px; background: #f0f0f0; box-shadow: 0 2px 2px rgba(0,0,0,.2); }
.h.c, .rot { border-radius: 50%; }
.rot { position: absolute; left: 50%; top: -60px; width: 20px; height: 20px; margin-left: -9px; border: 2px solid #2e7d4f; background: #a9dcbc; }
.stem { position: absolute; left: 50%; top: -40px; width: 2px; height: 26px; background: repeating-linear-gradient(#44699c 0 8px, transparent 8px 16px); }
.scroll { width: 30px; background: #fafafa; border-left: 2px solid #e8e8e8; display: flex; flex-direction: column; }
.scroll-track { height: 1162px; padding: 583px 0 0 6px; }
.scroll-track i { display: block; width: 16px; height: 578px; border-radius: 8px; background: #c1c1c1; }
.scroll-btns { flex: 1; border-top: 2px solid #7f7f7f; background: #ececec; padding: 3px 0 0 5px; }
.hsplit { height: 19px; flex: none; display: flex; gap: 8px; align-items: center; justify-content: center; padding-right: 2px; background: linear-gradient(#fff, #e0e0e0); border-top: 2px solid #b5b5b5; border-bottom: 2px solid #b0b0b0; }
.notes { flex: 1; display: flex; justify-content: space-between; background: #fff; }
.notes p { padding: 6px 0 0 14px; font-size: 24px; line-height: 38px; }
.notes-track { width: 30px; background: #fafafa; border-left: 2px solid #e6e6e6; }

/* status bar */
.status { height: 56px; flex: none; display: flex; background: linear-gradient(#fff 2px, #eff1f2 2px 50%, #e1e3e5 50% 50px, #fff 50px); border-top: 2px solid #7f7f7f; }
.views { width: 195px; padding: 3px 12px 0 8px; display: flex; background: #f6f6f6; border-right: 2px solid #7f7f7f; }
.view { flex: 1; height: 47px; display: grid; place-items: center; border: 2px solid #555; border-left-width: 0; background: linear-gradient(#fdfdfd, #dcdcdc); }
.view:first-child { border-left-width: 2px; border-radius: 7px 0 0 7px; }
.view:last-child { border-radius: 0 7px 7px 0; }
.view.on { background: linear-gradient(#3a3a3a, #6d6d6d); border-color: #3a3a3a; flex: 0 0 60px; }
.mode { flex: 1; padding-left: 13px; font-size: 19.5px; line-height: 51px; }
.pageno { width: 257px; border-left: 2px solid #7f7f7f; padding-right: 12px; text-align: center; font-size: 22px; line-height: 51px; letter-spacing: .3px; }
.zoom { width: 434px; border-left: 2px solid #7f7f7f; display: flex; align-items: center; padding: 0 0 4px 31px; font-size: 23px; }
.zoom span { width: 87px; padding-top: 1px; }
.slider { width: 200px; height: 7px; border-radius: 4px; background: #b9b9b9; display: flex; align-items: center; }
.slider i { width: 24px; height: 24px; margin: 1px 0 0 44px; border-radius: 50%; border: 2px solid #777; background: radial-gradient(circle, #333 4px, #e2e2e2 5px); }
.fit { width: 46px; height: 38px; margin-left: 22px; display: grid; place-items: center; border: 2px solid #bdbdbd; border-radius: 5px; background: linear-gradient(#fdfdfd, #e3e3e3); }
.grip { align-self: flex-end; margin: 0 0 -2px auto; }
```
